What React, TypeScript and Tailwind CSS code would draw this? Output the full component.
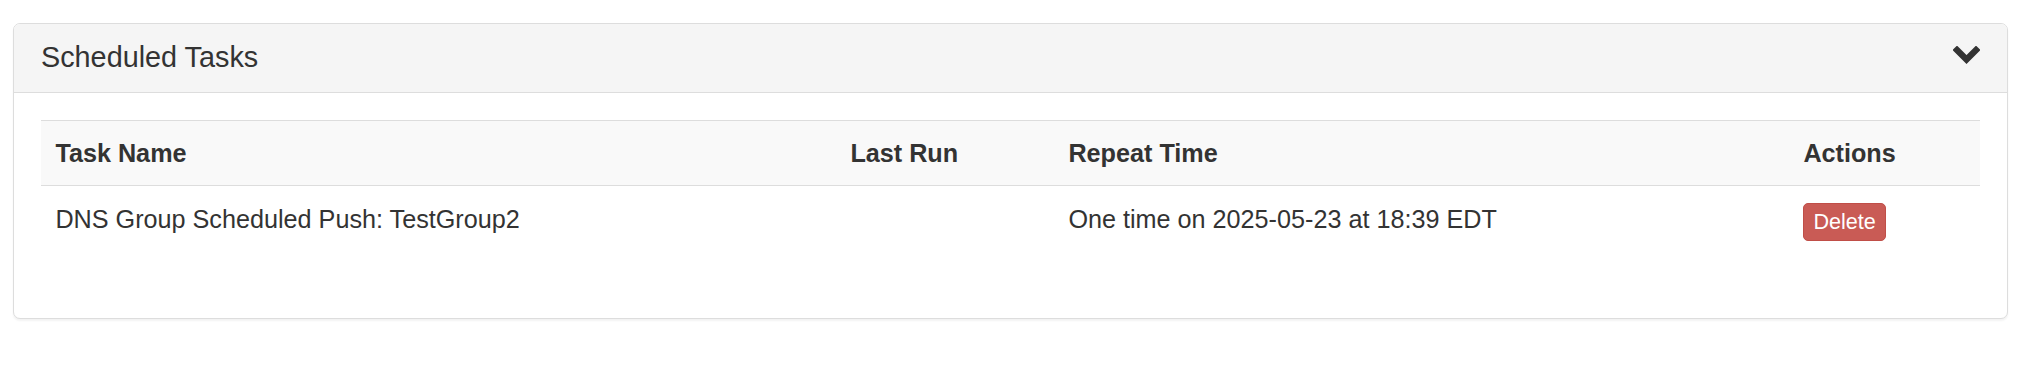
import React from "react";

export default function App() {
  const font = { fontFamily: '"Liberation Sans", Arial, Helvetica, sans-serif' };
  return (
    <div className="w-[2024px] h-[366px] bg-white pt-[23px] pl-[13px]" style={font}>
      <div className="w-[1995px] border border-[#dddddd] rounded-[7px] bg-white shadow-[0_2px_2px_rgba(0,0,0,0.05)] overflow-hidden">
        <div className="flex items-center justify-between bg-[#f5f5f5] border-b border-[#dddddd] py-[18px] px-[27px] text-[#333333]">
          <h3 className="text-[28.8px] leading-[31.7px] font-normal">Scheduled Tasks</h3>
          <svg width="27" height="19" viewBox="0 0 27 19" className="-mt-[4px]">
            <polyline
              points="4,4 13.5,13.5 23,4"
              fill="none"
              stroke="#333333"
              strokeWidth="6.2"
              strokeLinecap="square"
              strokeLinejoin="miter"
            />
          </svg>
        </div>
        <div className="px-[27px] pt-[27px] pb-[27px]">
          <div className="w-[1939px] mb-[36px] text-[25.2px] text-[#333333]">
            <div className="grid grid-cols-[795px_218px_735px_1fr] bg-[#f9f9f9] border-t border-b border-[#dddddd] font-bold leading-[36px]">
              <div className="px-[14.4px] py-[14.4px]">Task Name</div>
              <div className="px-[14.4px] py-[14.4px]">Last Run</div>
              <div className="px-[14.4px] py-[14.4px]">Repeat Time</div>
              <div className="px-[14.4px] py-[14.4px]">Actions</div>
            </div>
            <div className="grid grid-cols-[795px_218px_735px_1fr] leading-[36px]">
              <div className="px-[14.4px] py-[14.4px]">DNS Group Scheduled Push: TestGroup2</div>
              <div className="px-[14.4px] py-[14.4px]"></div>
              <div className="px-[14.4px] py-[14.4px]">One time on 2025-05-23 at 18:39 EDT</div>
              <div className="px-[14.4px] py-[14.4px]">
                <button className="mt-[2px] block bg-[#c95b55] border border-[#c04e48] text-white text-[21.6px] leading-[32.4px] px-[9px] py-[1.8px] rounded-[5px]">
                  Delete
                </button>
              </div>
            </div>
          </div>
        </div>
      </div>
    </div>
  );
}
